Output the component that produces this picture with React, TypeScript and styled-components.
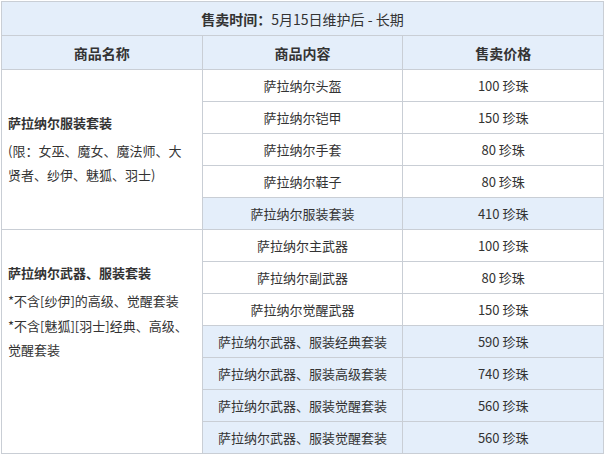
import React from "react";
import styled, { createGlobalStyle } from "styled-components";

const Global = createGlobalStyle`
  html, body { margin: 0; padding: 0; background: #fff; }
  body { font-family: "Noto Sans CJK SC", "Noto Sans", sans-serif; color: #333; }
`;

const Wrap = styled.div`
  padding: 1px 0 0 1px;
  width: 603px;
`;

const Table = styled.table`
  width: 603px;
  border-collapse: collapse;
  table-layout: fixed;
  border: 1px solid #c9ced5;
  font-size: 13px;
`;

const TitleCell = styled.th`
  height: 33px;
  padding: 0;
  background: #e4eefa;
  border: 1px solid #c9ced5;
  font-size: 14px;
  font-weight: normal;
  text-align: center;
  color: #333;
`;

const Strong = styled.b`
  font-weight: bold;
`;

const HeadCell = styled.th`
  height: 33px;
  padding: 0;
  background: #e4eefa;
  border: 1px solid #c9ced5;
  font-size: 14px;
  font-weight: bold;
  text-align: center;
  color: #333;
`;

const Cell = styled.td<{ $sum?: boolean }>`
  height: 31px;
  padding: 0 4px;
  border: 1px solid #c9ced5;
  text-align: center;
  vertical-align: middle;
  background: ${(p) => (p.$sum ? "#e4eefa" : "#fff")};
  white-space: nowrap;
  line-height: 20px;
`;

const NameCell = styled.td<{ $padBottom?: number }>`
  padding: 0 10px ${(p) => p.$padBottom ?? 0}px 6px;
  border: 1px solid #c9ced5;
  background: #fff;
  text-align: left;
  vertical-align: middle;
  line-height: 24px;
`;

const NameTitle = styled.div`
  font-weight: bold;
  margin-bottom: 4px;
`;

const Note = styled.div`
  margin-bottom: 1px;
`;

type Item = { name: string; price: string; sum?: boolean };

const group1: Item[] = [
  { name: "萨拉纳尔头盔", price: "100 珍珠" },
  { name: "萨拉纳尔铠甲", price: "150 珍珠" },
  { name: "萨拉纳尔手套", price: "80 珍珠" },
  { name: "萨拉纳尔鞋子", price: "80 珍珠" },
  { name: "萨拉纳尔服装套装", price: "410 珍珠", sum: true },
];

const group2: Item[] = [
  { name: "萨拉纳尔主武器", price: "100 珍珠" },
  { name: "萨拉纳尔副武器", price: "80 珍珠" },
  { name: "萨拉纳尔觉醒武器", price: "150 珍珠" },
  { name: "萨拉纳尔武器、服装经典套装", price: "590 珍珠", sum: true },
  { name: "萨拉纳尔武器、服装高级套装", price: "740 珍珠", sum: true },
  { name: "萨拉纳尔武器、服装觉醒套装", price: "560 珍珠", sum: true },
  { name: "萨拉纳尔武器、服装觉醒套装", price: "560 珍珠", sum: true },
];

const Group: React.FC<{ items: Item[]; head: React.ReactNode; padBottom?: number }> = ({
  items,
  head,
  padBottom,
}) => (
  <>
    {items.map((it, i) => (
      <tr key={i}>
        {i === 0 && (
          <NameCell rowSpan={items.length} $padBottom={padBottom}>
            {head}
          </NameCell>
        )}
        <Cell $sum={it.sum}>{it.name}</Cell>
        <Cell $sum={it.sum}>{it.price}</Cell>
      </tr>
    ))}
  </>
);

export default function App() {
  return (
    <Wrap>
      <Global />
      <Table>
        <thead>
          <tr>
            <TitleCell colSpan={3}>
              <Strong>售卖时间：</Strong>5月15日维护后 - 长期
            </TitleCell>
          </tr>
          <tr>
            <HeadCell>商品名称</HeadCell>
            <HeadCell>商品内容</HeadCell>
            <HeadCell>售卖价格</HeadCell>
          </tr>
        </thead>
        <tbody>
          <Group
            items={group1}
            head={
              <>
                <NameTitle>萨拉纳尔服装套装</NameTitle>
                <Note>(限：女巫、魔女、魔法师、大贤者、纱伊、魅狐、羽士)</Note>
              </>
            }
          />
          <Group
            items={group2}
            padBottom={60}
            head={
              <>
                <NameTitle>萨拉纳尔武器、服装套装</NameTitle>
                <Note>*不含[纱伊]的高级、觉醒套装</Note>
                <Note>*不含[魅狐][羽士]经典、高级、觉醒套装</Note>
              </>
            }
          />
        </tbody>
      </Table>
    </Wrap>
  );
}
